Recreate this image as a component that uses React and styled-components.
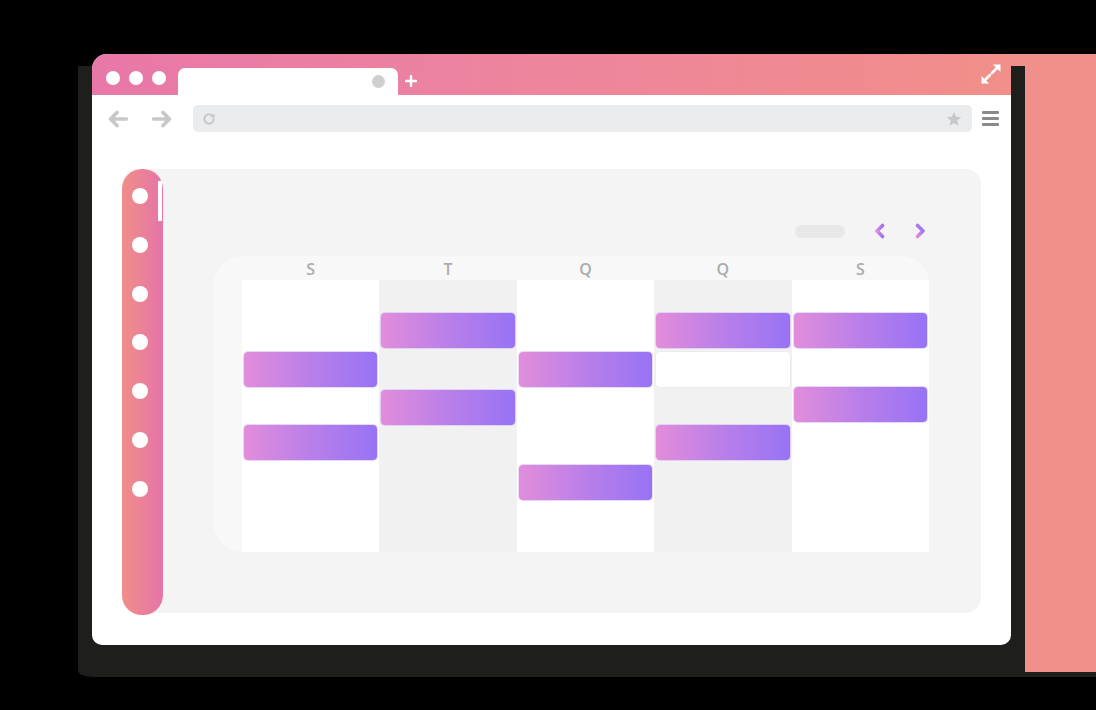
import React from "react";
import styled, { createGlobalStyle } from "styled-components";

const GlobalStyle = createGlobalStyle`
  html, body { margin: 0; padding: 0; background: #000; }
  body { font-family: "Open Sans", "Liberation Sans", sans-serif; }
  * { box-sizing: border-box; }
`;

const Stage = styled.div`
  position: relative;
  width: 1096px;
  height: 710px;
  padding: 54px 0 0 92px;
  overflow: hidden;
`;

const SalmonBack = styled.div`
  position: absolute;
  left: 1000px;
  top: 54px;
  width: 96px;
  height: 623px;
  background: #f1908a;
  border-bottom: 5px solid #1e1e1d;
`;

const ShadowBack = styled.div`
  position: absolute;
  left: 78px;
  top: 66px;
  width: 947px;
  height: 611px;
  background: #1e1e1d;
  border-bottom-left-radius: 16px 6px;
`;

const Browser = styled.div`
  position: relative;
  width: 919px;
  height: 591px;
  background: #fff;
  border-radius: 15px 0 10px 10px;
  overflow: hidden;
  display: flex;
  flex-direction: column;
`;

const Header = styled.div`
  height: 41px;
  flex: none;
  display: flex;
  align-items: flex-end;
  padding-left: 14px;
  background: linear-gradient(90deg, #e878a8 0%, #ec83a0 40%, #f18f89 100%);
`;

const Dots = styled.div`
  display: flex;
  gap: 9px;
  margin-bottom: 10px;
`;

const Dot = styled.span`
  width: 14px;
  height: 14px;
  border-radius: 50%;
  background: #fff;
`;

const Tab = styled.div`
  width: 220px;
  height: 27px;
  margin-left: 12px;
  background: #fff;
  border-radius: 7px 7px 0 0;
  display: flex;
  align-items: center;
  justify-content: flex-end;
  padding-right: 13px;
`;

const TabClose = styled.span`
  width: 13px;
  height: 13px;
  border-radius: 50%;
  background: #cfcfcf;
`;

const NewTab = styled.svg`
  margin-left: 7px;
  margin-bottom: 8px;
`;

const Expand = styled.svg`
  margin-left: auto;
  margin-right: 10px;
  margin-bottom: 11px;
`;

const Toolbar = styled.div`
  height: 50px;
  flex: none;
  display: flex;
  align-items: center;
  padding: 0 12px 3px 15px;
`;

const NavArrow = styled.svg`
  flex: none;
  margin-right: ${(p) => p.$gap}px;
`;

const Address = styled.div`
  flex: 1;
  height: 27px;
  border-radius: 5px;
  background: #ebeced;
  display: flex;
  align-items: center;
  justify-content: space-between;
  padding: 0 10px 0 9px;
`;

const Menu = styled.div`
  margin-left: 10px;
  width: 17px;
  display: flex;
  flex-direction: column;
  gap: 3px;
`;

const MenuBar = styled.span`
  height: 3px;
  border-radius: 1px;
  background: #8a8a8a;
`;

const Content = styled.div`
  flex: 1;
  display: flex;
  padding: 24px 30px 32px 30px;
`;

const Panel = styled.div`
  flex: 1;
  display: flex;
  background: #f4f4f4;
  border-radius: 15px;
`;

const Sidebar = styled.div`
  position: relative;
  width: 41px;
  flex: none;
  margin-bottom: -2px;
  border-radius: 20px;
  background: linear-gradient(90deg, #f08e88 0%, #e574a9 100%);
  display: flex;
  flex-direction: column;
  align-items: center;
  padding: 19px 5px 0 0;
  gap: 32.8px;
`;

const SideDot = styled.span`
  width: 16px;
  height: 16px;
  border-radius: 50%;
  background: #fff;
  flex: none;
`;

const ActiveMark = styled.span`
  position: absolute;
  right: 1px;
  top: 12px;
  width: 4px;
  height: 40px;
  background: #fff;
`;

const Main = styled.div`
  flex: 1;
  display: flex;
  flex-direction: column;
  padding: 0 52px 61px 50px;
`;

const TopBar = styled.div`
  height: 87px;
  flex: none;
  display: flex;
  justify-content: flex-end;
  align-items: flex-start;
  padding: 54px 3px 0 0;
`;

const Controls = styled.div`
  display: flex;
  align-items: center;
  height: 16px;
`;

const Pill = styled.span`
  width: 50px;
  height: 13px;
  border-radius: 6px;
  background: #e8e8e8;
  margin-right: 29px;
`;

const Chevron = styled.svg`
  margin-left: ${(p) => p.$gap}px;
`;

const Calendar = styled.div`
  flex: 1;
  display: grid;
  grid-template-columns: 29px repeat(5, 1fr);
  grid-template-rows: 24px 1fr;
  background: #f8f8f8;
  border-radius: 30px 28px 0 30px;
  overflow: hidden;
`;

const DayLabel = styled.div`
  grid-row: 1;
  grid-column: ${(p) => p.$col};
  text-align: center;
  font-size: 16px;
  font-weight: 600;
  line-height: 24px;
  padding-top: 1px;
  color: #acacac;
`;

const DayColumn = styled.div`
  grid-row: 2;
  grid-column: ${(p) => p.$col};
  position: relative;
  background: ${(p) => (p.$shade ? "#f1f1f1" : "#ffffff")};
`;

const Event = styled.div`
  position: absolute;
  left: 2px;
  right: 2px;
  top: ${(p) => p.$top}px;
  height: 35px;
  border-radius: 4px;
  background: ${(p) =>
    p.$blank
      ? "#ffffff"
      : "linear-gradient(90deg, #e28ddb 0%, #b97fe9 50%, #9773f5 100%)"};
  box-shadow: ${(p) =>
    p.$blank ? "0 0 0 1px #ececec" : "0 0 0 1px rgba(214, 190, 245, 0.6)"};
`;

const days = [
  { label: "S", shade: false, events: [{ top: 72 }, { top: 145 }] },
  { label: "T", shade: true, events: [{ top: 33 }, { top: 110 }] },
  { label: "Q", shade: false, events: [{ top: 72 }, { top: 185 }] },
  { label: "Q", shade: true, events: [{ top: 33 }, { top: 72, blank: true }, { top: 145 }] },
  { label: "S", shade: false, events: [{ top: 33 }, { top: 107 }] },
];

const ArrowIcon = ({ dir, gap }) => (
  <NavArrow $gap={gap} width="22" height="18" viewBox="0 0 22 18">
    <g transform={dir === "right" ? "translate(22 0) scale(-1 1)" : undefined}>
      <path
        d="M19.5 9H3.5M10 2.5L3.5 9L10 15.5"
        fill="none"
        stroke="#c8c8c8"
        strokeWidth="3.6"
        strokeLinecap="round"
        strokeLinejoin="round"
      />
    </g>
  </NavArrow>
);

export default function App() {
  return (
    <>
      <GlobalStyle />
      <Stage>
        <SalmonBack />
        <ShadowBack />
        <Browser>
          <Header>
            <Dots>
              <Dot />
              <Dot />
              <Dot />
            </Dots>
            <Tab>
              <TabClose />
            </Tab>
            <NewTab width="12" height="12" viewBox="0 0 12 12">
              <path d="M6 1V11M1 6H11" stroke="#fff" strokeWidth="2.4" strokeLinecap="round" />
            </NewTab>
            <Expand width="20" height="20" viewBox="0 0 20 20">
              <path d="M19.5 0.5V8L12 0.5Z" fill="#fff" />
              <path d="M15.5 4.5L11 9" stroke="#fff" strokeWidth="2.6" strokeLinecap="round" />
              <path d="M0.5 19.5V12L8 19.5Z" fill="#fff" />
              <path d="M4.5 15.5L9 11" stroke="#fff" strokeWidth="2.6" strokeLinecap="round" />
            </Expand>
          </Header>
          <Toolbar>
            <ArrowIcon dir="left" gap={22} />
            <ArrowIcon dir="right" gap={20} />
            <Address>
              <svg width="14" height="14" viewBox="0 0 24 24" fill="none">
                <path
                  d="M20 12a8 8 0 1 1-2.6-5.9"
                  stroke="#c6c6c6"
                  strokeWidth="3.2"
                  strokeLinecap="round"
                />
                <path d="M21.5 2.5V9.5H14.5Z" fill="#c6c6c6" />
              </svg>
              <svg width="16" height="16" viewBox="0 0 24 24">
                <path
                  d="M12 1.5l3.2 7.1 7.6.7-5.8 5.1 1.8 7.6L12 18l-6.8 4 1.8-7.6-5.8-5.1 7.6-.7z"
                  fill="#c8c8c8"
                />
              </svg>
            </Address>
            <Menu>
              <MenuBar />
              <MenuBar />
              <MenuBar />
            </Menu>
          </Toolbar>
          <Content>
            <Panel>
              <Sidebar>
                <ActiveMark />
                {Array.from({ length: 7 }).map((_, i) => (
                  <SideDot key={i} />
                ))}
              </Sidebar>
              <Main>
                <TopBar>
                  <Controls>
                    <Pill />
                    <Chevron $gap={0} width="11" height="16" viewBox="0 0 11 16">
                      <defs>
                        <linearGradient id="chevL" x1="0" y1="0" x2="1" y2="0">
                          <stop offset="0" stopColor="#e08ddb" />
                          <stop offset="1" stopColor="#9873f5" />
                        </linearGradient>
                      </defs>
                      <path
                        d="M8.5 2.5L3 8L8.5 13.5"
                        fill="none"
                        stroke="url(#chevL)"
                        strokeWidth="3.6"
                        strokeLinecap="round"
                        strokeLinejoin="round"
                      />
                    </Chevron>
                    <Chevron $gap={30} width="11" height="16" viewBox="0 0 11 16">
                      <defs>
                        <linearGradient id="chevR" x1="0" y1="1" x2="0.6" y2="0">
                          <stop offset="0" stopColor="#e08ddb" />
                          <stop offset="1" stopColor="#9873f5" />
                        </linearGradient>
                      </defs>
                      <path
                        d="M2.5 2.5L8 8L2.5 13.5"
                        fill="none"
                        stroke="url(#chevR)"
                        strokeWidth="3.6"
                        strokeLinecap="round"
                        strokeLinejoin="round"
                      />
                    </Chevron>
                  </Controls>
                </TopBar>
                <Calendar>
                  {days.map((d, i) => (
                    <DayLabel key={`l${i}`} $col={i + 2}>
                      {d.label}
                    </DayLabel>
                  ))}
                  {days.map((d, i) => (
                    <DayColumn key={`c${i}`} $col={i + 2} $shade={d.shade}>
                      {d.events.map((e, j) => (
                        <Event key={j} $top={e.top} $blank={e.blank} />
                      ))}
                    </DayColumn>
                  ))}
                </Calendar>
              </Main>
            </Panel>
          </Content>
        </Browser>
      </Stage>
    </>
  );
}
